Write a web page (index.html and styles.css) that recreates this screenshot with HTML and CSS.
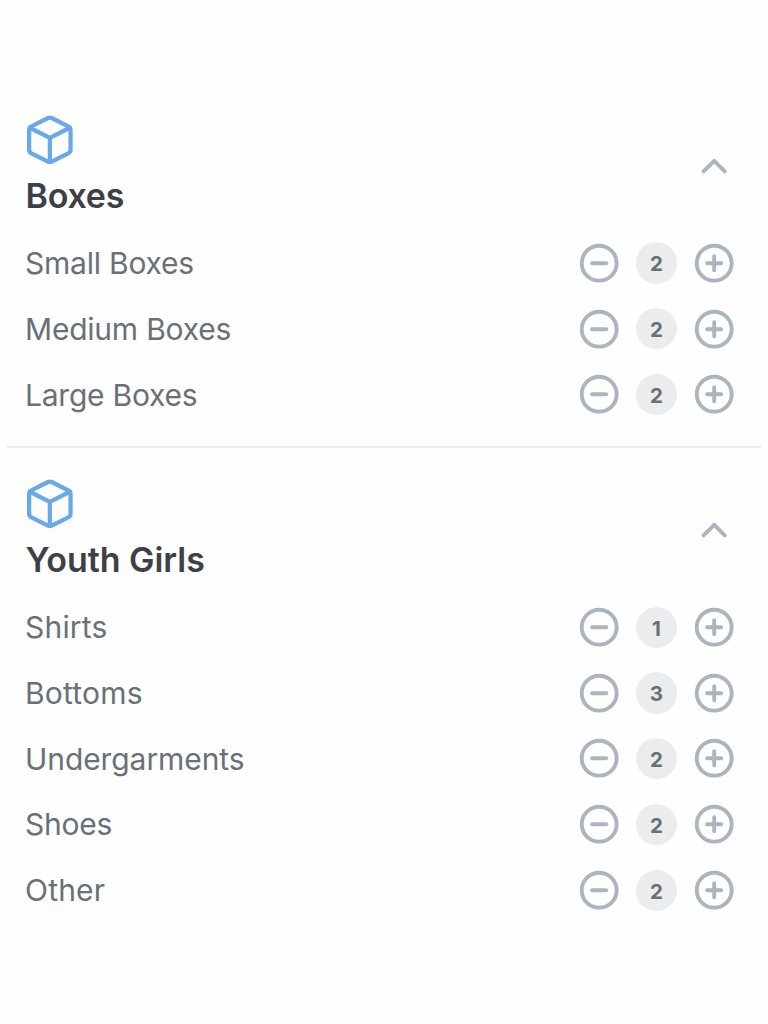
FILE: index.html
```html
<!DOCTYPE html>
<html lang="en">
<head>
<meta charset="utf-8">
<title>Inventory</title>
<link rel="stylesheet" href="styles.css">
</head>
<body>
<svg class="sprite" aria-hidden="true">
  <symbol id="box" viewBox="0 0 24 24"><path d="M12.89 1.45l8 4A2 2 0 0 1 22 7.24v9.53a2 2 0 0 1-1.11 1.79l-8 4a2 2 0 0 1-1.79 0l-8-4a2 2 0 0 1-1.1-1.8V7.24a2 2 0 0 1 1.11-1.79l8-4a2 2 0 0 1 1.78 0z"/><path d="M2.32 6.16L12 11l9.68-4.84M12 22.76V11"/></symbol>
  <symbol id="up" viewBox="0 0 24 24"><path d="M18 15l-6-6-6 6"/></symbol>
  <symbol id="minus" viewBox="0 0 24 24"><circle cx="12" cy="12" r="9.9"/><path d="M8 12h8"/></symbol>
  <symbol id="plus" viewBox="0 0 24 24"><circle cx="12" cy="12" r="9.9"/><path d="M12 8v8M8 12h8"/></symbol>
</svg>
<main class="list">
  <section class="group">
    <header class="head">
      <div><svg class="box"><use href="#box"/></svg><h2 class="title">Boxes</h2></div>
      <svg class="icon"><use href="#up"/></svg>
    </header>
    <div class="row"><span class="label tight">Small Boxes</span><div class="stepper"><svg class="icon"><use href="#minus"/></svg><span class="count">2</span><svg class="icon"><use href="#plus"/></svg></div></div>
    <div class="row"><span class="label tight">Medium Boxes</span><div class="stepper"><svg class="icon"><use href="#minus"/></svg><span class="count">2</span><svg class="icon"><use href="#plus"/></svg></div></div>
    <div class="row"><span class="label tight">Large Boxes</span><div class="stepper"><svg class="icon"><use href="#minus"/></svg><span class="count">2</span><svg class="icon"><use href="#plus"/></svg></div></div>
  </section>
  <section class="group">
    <header class="head">
      <div><svg class="box"><use href="#box"/></svg><h2 class="title wide">Youth Girls</h2></div>
      <svg class="icon"><use href="#up"/></svg>
    </header>
    <div class="row"><span class="label loose">Shirts</span><div class="stepper"><svg class="icon"><use href="#minus"/></svg><span class="count">1</span><svg class="icon"><use href="#plus"/></svg></div></div>
    <div class="row"><span class="label loose">Bottoms</span><div class="stepper"><svg class="icon"><use href="#minus"/></svg><span class="count">3</span><svg class="icon"><use href="#plus"/></svg></div></div>
    <div class="row"><span class="label">Undergarments</span><div class="stepper"><svg class="icon"><use href="#minus"/></svg><span class="count">2</span><svg class="icon"><use href="#plus"/></svg></div></div>
    <div class="row"><span class="label tight">Shoes</span><div class="stepper"><svg class="icon"><use href="#minus"/></svg><span class="count">2</span><svg class="icon"><use href="#plus"/></svg></div></div>
    <div class="row"><span class="label loose">Other</span><div class="stepper"><svg class="icon"><use href="#minus"/></svg><span class="count">2</span><svg class="icon"><use href="#plus"/></svg></div></div>
  </section>
</main>
</body>
</html>
```
FILE: styles.css
```css
* { box-sizing: border-box; }
body { margin: 0; background: #fefefe; font-family: Inter, "Liberation Sans", sans-serif; }
.sprite { display: none; }
.list { padding: 84px 7px 0; }
.group { padding: 30px 26px 18.7px 18px; }
.group + .group { border-top: 2px solid #ebeced; padding-top: 30px; }
.head { display: flex; justify-content: space-between; align-items: center; height: 116.2px; padding-bottom: 11.8px; }
svg { display: block; fill: none; stroke: #abb5be; stroke-width: 2.2; stroke-linecap: round; stroke-linejoin: round; }
.box { width: 49.7px; height: 49.7px; stroke: #69a9e8; stroke-width: 2.05; }
.icon { width: 42.4px; height: 42.4px; flex: none; }
.title { margin: 9.3px 0 0 0.5px; font-size: 34px; line-height: 44px; font-weight: 600; letter-spacing: -0.25px; color: #3d4147; }
.title.wide { letter-spacing: -0.05px; }
.row { display: flex; align-items: center; justify-content: space-between; height: 65.75px; }
.label { font-size: 30px; line-height: 40px; letter-spacing: -0.08px; color: #687078; }
.label.tight { letter-spacing: -0.22px; }
.label.loose { letter-spacing: 0.2px; }
.stepper { display: flex; align-items: center; gap: 15.6px; }
.count { width: 41.3px; height: 41.3px; border-radius: 50%; background: #ebeced; color: #687075; font-size: 20.5px; line-height: 43px; font-weight: 700; text-align: center; }
```
